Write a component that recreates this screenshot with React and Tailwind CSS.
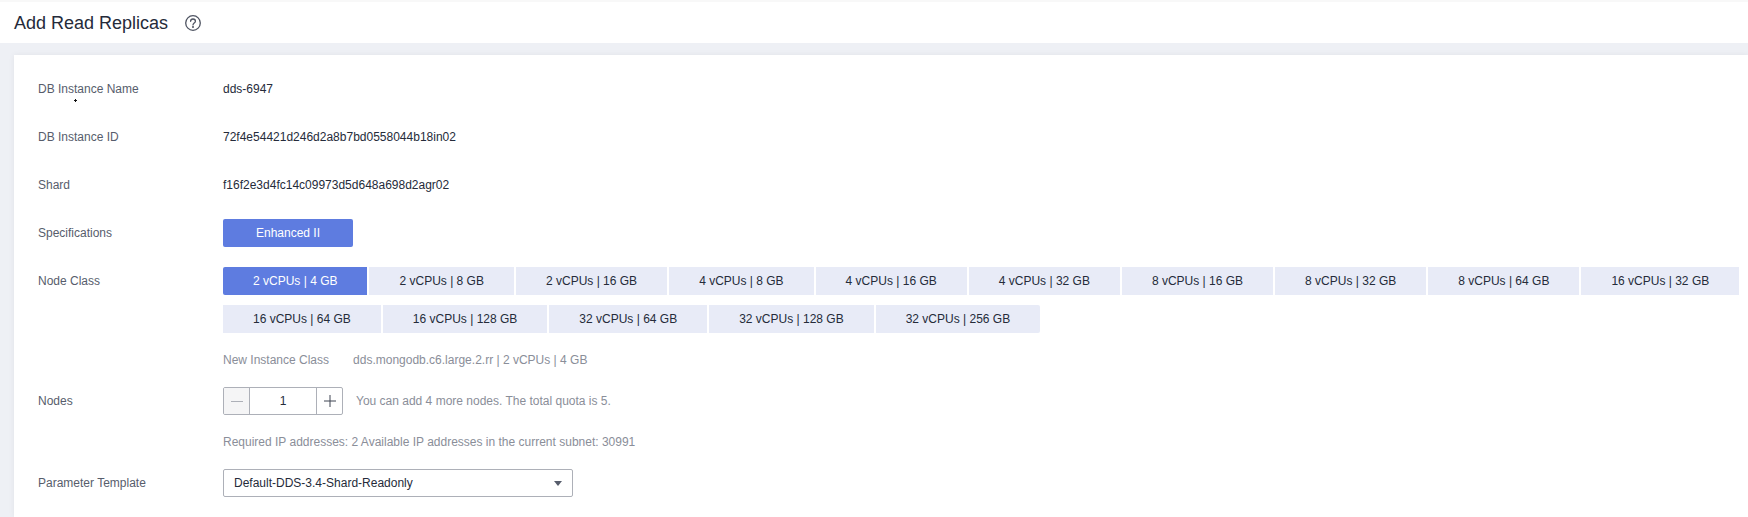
const nodeClasses = [
  "2 vCPUs | 4 GB",
  "2 vCPUs | 8 GB",
  "2 vCPUs | 16 GB",
  "4 vCPUs | 8 GB",
  "4 vCPUs | 16 GB",
  "4 vCPUs | 32 GB",
  "8 vCPUs | 16 GB",
  "8 vCPUs | 32 GB",
  "8 vCPUs | 64 GB",
  "16 vCPUs | 32 GB",
  "16 vCPUs | 64 GB",
  "16 vCPUs | 128 GB",
  "32 vCPUs | 64 GB",
  "32 vCPUs | 128 GB",
  "32 vCPUs | 256 GB",
];

function Row({ label, children, className = "mb-5" }) {
  return (
    <div className={`flex ${className}`}>
      <div className="w-[185px] shrink-0 h-7 leading-7 text-[#575d6c]">{label}</div>
      <div className="flex-1 min-w-0">{children}</div>
    </div>
  );
}

function Note({ children }) {
  return <div className="h-[18px] leading-[18px] my-[18px] text-[#8a8e99]">{children}</div>;
}

export default function App() {
  return (
    <div className="h-[517px] overflow-hidden flex flex-col bg-[#eef0f5] font-['Liberation_Sans',Arial,sans-serif] text-xs text-[#252b3a]">
      <header className="h-[43px] shrink-0 bg-white border-t-2 border-[#f8f8f8] flex items-center pl-[14px]">
        <h1 className="text-lg text-[#252b3a]">Add Read Replicas</h1>
        <svg className="ml-[17px]" width="16" height="16" viewBox="0 0 16 16" fill="none" stroke="#4f5462" strokeWidth="1.3">
          <circle cx="8" cy="8" r="7.3" />
          <path d="M5.6 6.3c0-1.4 1.1-2.3 2.4-2.3s2.4.9 2.4 2.2c0 1.9-2.4 1.9-2.4 3.7" strokeLinecap="round" />
          <circle cx="8" cy="12" r="0.4" fill="#4f5462" />
        </svg>
      </header>

      <main className="relative flex-1 ml-[14px] mt-3 bg-white pl-6 pt-5 shadow-[0_0_6px_rgba(0,0,0,0.06)]">
        <svg className="absolute left-[60px] top-[44px]" width="3" height="3" viewBox="0 0 3 3" fill="#111">
          <path d="M1 0h1v1h1v1H2v1H1V2H0V1h1z" />
        </svg>

        <Row label="DB Instance Name">
          <div className="leading-7">dds-6947</div>
        </Row>
        <Row label="DB Instance ID">
          <div className="leading-7">72f4e54421d246d2a8b7bd0558044b18in02</div>
        </Row>
        <Row label="Shard">
          <div className="leading-7">f16f2e3d4fc14c09973d5d648a698d2agr02</div>
        </Row>
        <Row label="Specifications">
          <button className="h-7 w-[130px] rounded-[2px] bg-[#5e7ce0] text-white">Enhanced II</button>
        </Row>
        <Row label="Node Class" className="">
          <div className="flex flex-wrap gap-x-0.5 gap-y-2.5">
            {nodeClasses.map((c, i) => (
              <button
                key={c}
                className={
                  i === 0
                    ? "h-7 px-[30px] rounded-l-[2px] bg-[#5e7ce0] text-white"
                    : i === nodeClasses.length - 1
                    ? "h-7 px-[30px] rounded-r-[2px] bg-[#e8ebf7]"
                    : "h-7 px-[30px] bg-[#e8ebf7]"
                }
              >
                {c}
              </button>
            ))}
          </div>
          <Note>
            <span>New Instance Class</span>
            <span className="ml-6">dds.mongodb.c6.large.2.rr | 2 vCPUs | 4 GB</span>
          </Note>
        </Row>
        <Row label="Nodes" className="">
          <div className="flex items-center h-7">
            <div className="flex h-7 w-[120px] rounded-[2px] border border-[#adb0b8] overflow-hidden">
              <div className="w-[26px] bg-[#f5f5f6] border-r border-[#adb0b8] flex items-center justify-center">
                <span className="block w-3 h-px bg-[#adb0b8]" />
              </div>
              <div className="flex-1 flex items-center justify-center">1</div>
              <div className="w-[26px] border-l border-[#adb0b8] flex items-center justify-center">
                <svg width="12" height="12" viewBox="0 0 12 12" stroke="#3f4452" strokeWidth="1">
                  <path d="M0 6h12M6 0v12" />
                </svg>
              </div>
            </div>
            <span className="ml-[13px] text-[#8a8e99]">You can add 4 more nodes. The total quota is 5.</span>
          </div>
          <Note>Required IP addresses: 2 Available IP addresses in the current subnet: 30991</Note>
        </Row>
        <Row label="Parameter Template" className="">
          <div className="flex items-center justify-between h-7 w-[350px] rounded-[2px] border border-[#adb0b8] pl-2.5 pr-2.5">
            <span>Default-DDS-3.4-Shard-Readonly</span>
            <svg width="8" height="5" viewBox="0 0 8 5" fill="#575d6c">
              <path d="M0 0h8L4 5z" />
            </svg>
          </div>
        </Row>
      </main>
    </div>
  );
}
